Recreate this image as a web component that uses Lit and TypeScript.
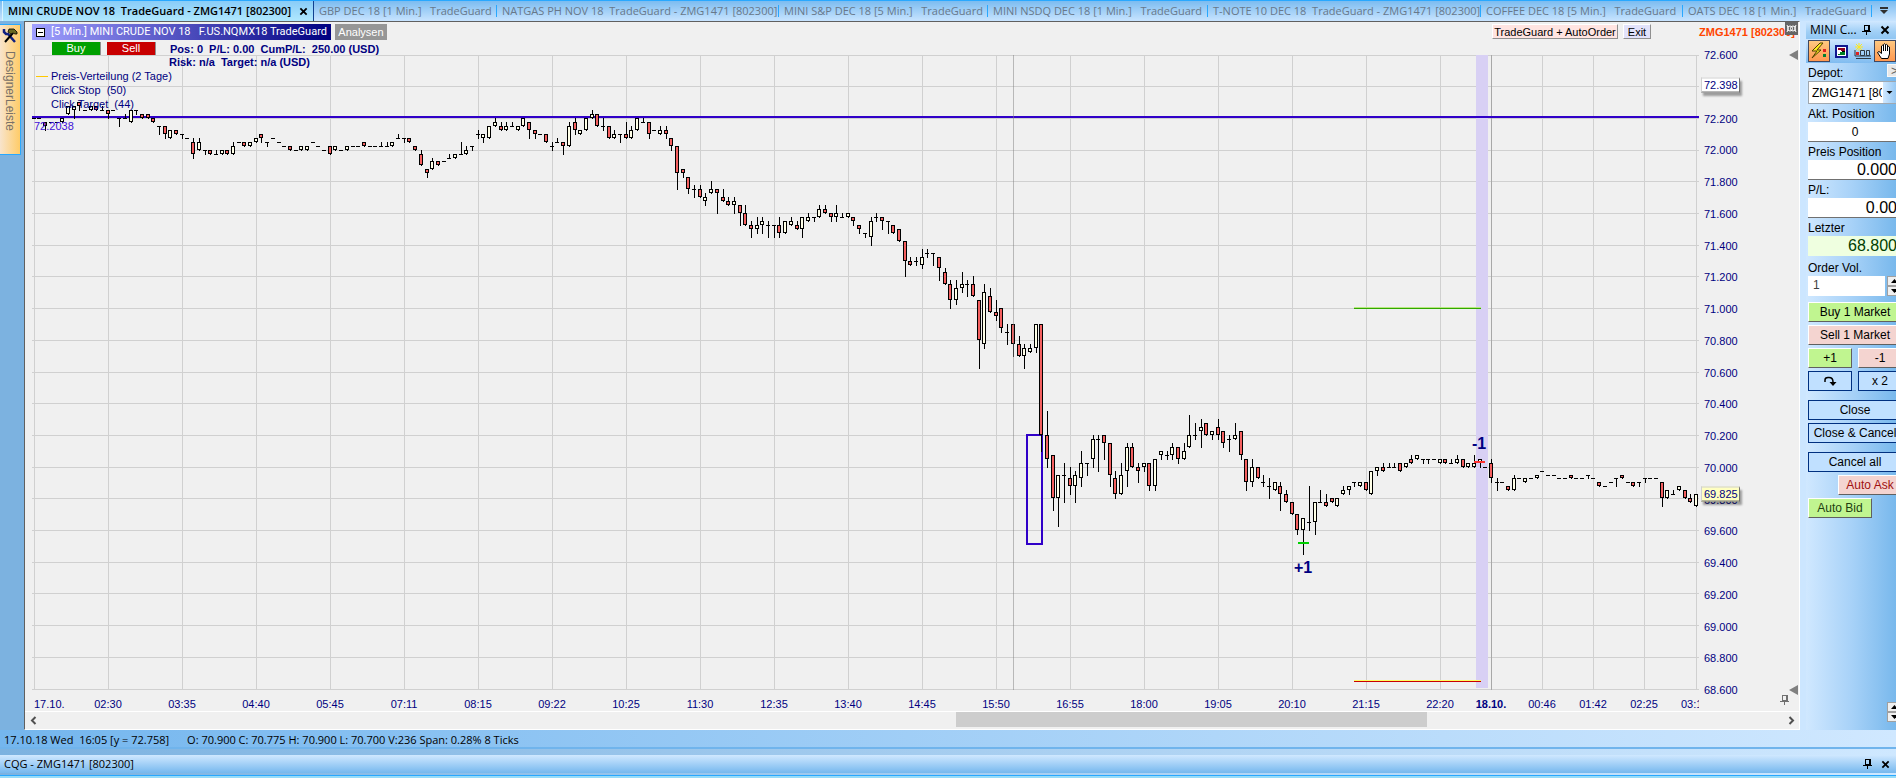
import { LitElement, html, svg, css } from "lit";
import { customElement } from "lit/decorators.js";
import { classMap } from "lit/directives/class-map.js";

/* Bars as [open, high, low, close], counted in 0.025 ticks below 72.600. A single number is a flat bar. */
type Bar = number | [number, number, number, number];
const BARS: Bar[] = [
  16, 16, [17, 17, 19, 18], 17, 17, [17, 16, 17, 16], [15, 13, 15, 13], [14, 13, 16, 13], [12, 12, 14, 13], 14,
  [14, 13, 14, 13], [13, 13, 14, 14], [14, 13, 14, 14], [14, 14, 16, 15], 14, [16, 16, 18, 16], [16, 15, 16, 16], [17, 14, 17, 14], [14, 14, 15, 14], [15, 15, 16, 16],
  [15, 15, 16, 16], [16, 16, 17, 17], [18, 18, 20, 18], [18, 18, 21, 20], [21, 19, 21, 19], [19, 19, 20, 20], [20, 20, 21, 20], 21, [22, 21, 26, 25], [24, 21, 24, 22],
  [24, 24, 25, 24], [24, 24, 25, 25], [25, 24, 25, 25], [25, 24, 25, 24], [24, 24, 25, 25], [25, 22, 25, 23], 22, [22, 22, 23, 23], [23, 22, 23, 22], [22, 21, 22, 21],
  [20, 20, 22, 21], [22, 22, 23, 22], 21, 22, 23, [23, 23, 24, 24], 24, [24, 23, 24, 23], [24, 23, 24, 23], 22,
  23, 24, [23, 23, 25, 25], [24, 23, 24, 23], 24, [24, 23, 24, 23], 23, 23, [22, 22, 23, 23], 23,
  23, [23, 22, 23, 23], [23, 22, 23, 23], [23, 22, 23, 22], [21, 20, 21, 21], [21, 21, 22, 21], [21, 21, 22, 22], [23, 23, 24, 24], [25, 24, 28, 28], [29, 29, 31, 30],
  [29, 26, 29, 27], [27, 27, 28, 28], 27, [26, 25, 26, 26], [26, 25, 26, 25], [25, 22, 25, 25], [25, 23, 25, 24], [23, 23, 24, 23], [20, 19, 21, 20], [21, 20, 22, 20],
  [21, 18, 21, 18], [18, 16, 18, 17], [18, 17, 19, 19], [19, 17, 19, 18], [18, 17, 18, 18], [19, 18, 19, 18], [18, 16, 18, 16], [17, 17, 21, 19], [19, 19, 21, 20], 20,
  [20, 20, 22, 22], [23, 22, 24, 23], [22, 21, 22, 22], [22, 22, 25, 23], [23, 17, 23, 18], [17, 16, 20, 19], [20, 19, 20, 19], [19, 16, 19, 16], [16, 14, 16, 15], [15, 15, 18, 18],
  [18, 16, 19, 18], [18, 18, 21, 21], [21, 19, 21, 20], [20, 20, 22, 20], [20, 17, 21, 21], [21, 18, 21, 19], [19, 16, 19, 16], [17, 16, 17, 17], [17, 17, 21, 20], 19,
  [20, 18, 20, 19], [19, 18, 21, 20], [21, 21, 24, 23], [23, 23, 34, 30], [29, 29, 31, 30], [31, 31, 35, 34], [34, 33, 36, 34], [34, 33, 36, 36], [37, 35, 38, 36], [35, 32, 35, 34],
  [34, 34, 40, 35], [36, 34, 37, 37], [37, 36, 38, 38], [38, 36, 40, 37], [38, 38, 43, 40], [40, 38, 43, 43], [43, 42, 46, 44], [44, 41, 45, 43], [43, 41, 45, 42], [43, 42, 46, 43],
  [43, 43, 46, 43], [43, 41, 46, 45], [45, 42, 45, 42], [43, 41, 43, 42], [43, 42, 44, 44], [44, 41, 46, 41], [42, 40, 42, 41], [41, 41, 42, 41], [41, 38, 41, 39], [39, 38, 40, 40],
  [40, 40, 42, 41], [41, 38, 42, 40], [41, 40, 41, 41], [41, 40, 41, 40], [41, 41, 43, 42], [43, 43, 45, 44], [45, 45, 46, 45], [46, 41, 48, 42], [41, 40, 42, 41], [41, 41, 44, 42],
  [42, 42, 45, 42], [43, 43, 45, 45], [44, 44, 47, 47], [47, 47, 56, 52], [52, 51, 53, 53], [52, 51, 53, 52], [53, 49, 54, 51], [50, 49, 51, 50], [50, 50, 53, 50], [51, 51, 57, 54],
  [55, 54, 58, 58], [58, 57, 64, 62], [62, 57, 63, 59], [59, 55, 60, 58], [58, 57, 61, 58], [58, 56, 61, 61], [62, 62, 79, 72], [73, 58, 74, 60], [61, 59, 65, 65], [65, 62, 67, 66],
  [64, 64, 70, 69], [70, 68, 73, 70], [68, 68, 76, 73], [73, 71, 76, 76], [76, 73, 79, 74], [75, 73, 75, 74], [74, 68, 75, 68], [68, 68, 100, 96], [96, 90, 104, 102], [101, 101, 115, 112],
  [112, 106, 119, 106], [106, 103, 113, 106], [107, 104, 111, 109], [109, 105, 113, 106], [107, 100, 109, 103], [103, 103, 106, 103], [102, 96, 104, 97], [97, 96, 105, 97], [96, 96, 102, 98], [98, 98, 109, 106],
  [107, 105, 112, 111], [111, 103, 111, 106], [105, 98, 109, 99], [99, 98, 104, 104], [104, 103, 108, 105], [104, 103, 105, 103], [103, 103, 110, 109], [109, 102, 110, 102], [101, 100, 102, 100], [101, 100, 102, 101],
  [101, 98, 102, 99], [99, 99, 103, 102], [102, 98, 102, 100], [99, 91, 99, 96], [96, 93, 97, 96], [95, 92, 99, 94], [93, 93, 96, 96], [96, 95, 97, 95], [94, 92, 97, 96], [95, 95, 99, 98],
  [97, 96, 100, 97], [97, 93, 97, 96], [95, 95, 102, 101], [102, 102, 110, 108], [108, 102, 109, 104], [104, 104, 107, 107], [108, 106, 109, 108], [109, 107, 112, 109], [110, 108, 110, 108], [109, 108, 115, 111],
  [111, 110, 113, 113], [113, 113, 116, 116], [116, 116, 121, 120], [120, 117, 126, 117], [118, 109, 120, 118], [118, 113, 121, 113], [113, 110, 113, 113], [113, 111, 114, 114], [112, 112, 113, 113], [114, 112, 114, 112],
  [111, 109, 111, 110], [110, 109, 111, 109], [108, 108, 109, 108], [109, 108, 109, 108], [108, 108, 110, 110], [111, 105, 111, 105], [105, 104, 106, 104], [104, 103, 105, 105], [104, 103, 104, 104], [104, 103, 104, 104],
  [103, 103, 105, 105], [104, 103, 104, 103], [102, 101, 103, 103], [102, 101, 102, 101], [102, 102, 103, 102], [102, 102, 103, 102], 102, [103, 102, 103, 102], [102, 102, 103, 103], [103, 102, 103, 103],
  [103, 101, 103, 102], [102, 102, 104, 104], [104, 103, 104, 103], [104, 101, 104, 103], [103, 102, 104, 102], 104, [103, 102, 108, 107], [108, 107, 110, 108], 108, [109, 109, 110, 110],
  [110, 106, 110, 107], 107, [108, 107, 108, 107], 107, [107, 106, 107, 106], 105, 106, 106, 107, 107,
  [106, 106, 107, 107], 107, 107, [106, 106, 107, 106], 107, [108, 108, 109, 109], 109, 108, [107, 107, 109, 107], [106, 106, 107, 107],
  108, [108, 108, 109, 109], [108, 108, 109, 108], [107, 107, 108, 107], 107, 107, [108, 108, 114, 112], [112, 110, 112, 110], [111, 110, 111, 111], [110, 109, 110, 109],
  [110, 110, 112, 112], [112, 111, 113, 113], [114, 111, 114, 111],
];

const PLOT_W = 1667;
const PLOT_H = 635;
const tickY = (t: number) => Math.floor((t * 634) / 160);
const barX = (i: number) => 2 + Math.floor((i * 74) / 13 + 0.3);

const TIMES = [
  "17.10.", "02:30", "03:35", "04:40", "05:45", "07:11", "08:15", "09:22", "10:25", "11:30", "12:35", "13:40",
  "14:45", "15:50", "16:55", "18:00", "19:05", "20:10", "21:15", "22:20", "18.10.", "00:46", "01:42", "02:25", "03:13",
];

const pin = svg`<path d="M3 1.5h5v5H3zM7 2v4M1 7h9M5.5 7v4" fill="none" stroke="currentColor" stroke-width="1" shape-rendering="crispEdges"/>`;
const cross = svg`<path d="M1.5 1.5l7 7M8.500 1.5l-7 7" fill="none" stroke="currentColor" stroke-width="2"/>`;

@customElement("price-chart")
export class PriceChart extends LitElement {
  static styles = css`
    :host { display: flex; flex-direction: column; min-width: 0; background: #f0f0f0; color: #000080;
      font: 11px/14px "Liberation Sans", Arial, sans-serif; border: solid; border-width: 1px;
      border-color: #606060 #fff #fff #606060; box-sizing: border-box; }
    button { font: inherit; padding: 0; border: 0; margin: 0; color: inherit; white-space: nowrap; }
    .title { display: flex; align-items: stretch; height: 16px; margin: 2px 0 0 7px; gap: 4px; position: relative; }
    .name { display: flex; align-items: center; gap: 6px; min-width: 297px; padding: 0 4px; box-sizing: border-box;
      color: #fff; font: 11px/16px Roboto, "Liberation Sans", sans-serif; white-space: pre; background: linear-gradient(90deg, #a0a0ff, #000080); }
    .fold { width: 9px; height: 9px; flex: none; display: grid; background: #fff; border: 1px solid #000; box-sizing: border-box; }
    .fold svg { width: 7px; height: 7px; }
    .analyse { background: #969696; color: #fff; width: 52px; }
    .spacer { flex: 1; }
    .auto, .exit { height: 15px; border: 1px solid #fff; border-color: #fff #909090 #909090 #fff; color: #000; box-sizing: border-box; }
    .auto { background: #ffe4e1; width: 126px; margin-right: 1px; }
    .exit { background: #e2e2fa; width: 28px; }
    .account { width: 100px; box-sizing: border-box; margin-left: 44px; color: #ff4500; font-weight: bold; line-height: 16px; white-space: nowrap; }
    .link { position: absolute; right: 1px; top: -2px; width: 13px; height: 13px; background: #666; }
    .orders { display: flex; align-items: center; height: 13px; margin: 2px 0 0 27px; gap: 6px; font-weight: bold; white-space: pre; }
    .orders button { width: 49px; height: 13px; line-height: 13px; color: #fff; font-weight: normal; border-right: 1px solid #909090; box-sizing: border-box; }
    .buy { background: #00a000; }
    .sell { background: #c80000; }
    .pos { margin-left: 8px; }
    .body { flex: 1; display: grid; grid-template-columns: minmax(0, 1fr) 100px; margin-left: 7px; min-height: 200px; }
    .plot { display: grid; min-width: 0; min-height: 0; position: relative; }
    .canvas, .notes { grid-area: 1 / 1; min-width: 0; min-height: 0; }
    .canvas { width: 100%; height: 100%; display: block; }
    .notes { z-index: 1; display: flex; flex-direction: column; align-items: flex-start; white-space: pre; pointer-events: none; }
    .risk { font-weight: bold; margin-left: 137px; }
    .legend { padding-left: 19px; position: relative; }
    .legend.key::before { content: ""; position: absolute; left: 4px; top: 7px; width: 12px; height: 1px; background: #ffc800; }
    .level { color: #4010d8; padding: 8px 0 0 2px; }
    .mark { position: absolute; transform: translate(-50%, -50%); font: bold 16px/16px "Liberation Sans", Arial, sans-serif; }
    .scale { position: relative; display: grid; }
    .prices { list-style: none; margin: -6px 0; padding: 0 0 0 5px; display: flex; flex-direction: column; justify-content: space-between; line-height: 12px; }
    .tag { position: absolute; left: 2px; width: 39px; height: 15px; box-sizing: border-box; padding-left: 2px; line-height: 13px;
      background: #fff; border: 1px solid #c8c8c8; border-color: #d0d0d0 #707070 #707070 #d0d0d0; box-shadow: 2px 3px 2px rgba(0,0,0,.35); transform: translateY(-50%); }
    .tag.last { background: #ffffc0; }
    .grip { position: absolute; right: 1px; width: 9px; height: 10px; color: #808080; }
    .grip.top { top: -5px; }
    .grip.end { bottom: -5px; }
    .times { list-style: none; margin: 0 100px 0 7px; padding: 7px 0 0; height: 21px; box-sizing: border-box; display: grid; overflow: hidden;
      grid-template-columns: minmax(0, 39fr) repeat(19, minmax(0, 74fr)) minmax(0, 28fr) minmax(0, 74fr) minmax(0, 28fr) minmax(0, 74fr) minmax(0, 18fr); }
    .times li { justify-self: center; white-space: nowrap; }
    .times li:first-child { justify-self: start; padding-left: 2px; }
    .times li:last-child { justify-self: start; }
    .times .day { font-weight: bold; }
    .foot { position: relative; }
    .foot .pin { position: absolute; right: 9px; top: 4px; width: 11px; height: 12px; color: #707070; }
    .bar { height: 18px; box-sizing: border-box; border-top: 1px solid #fff; display: grid; grid-template-columns: 16px 915fr 471fr 356fr 16px; }
    .bar button { background: none; display: grid; place-items: center; color: #505050; }
    .bar svg { width: 7px; height: 9px; }
    .thumb { background: #cdcdcd; grid-column: 3; height: 15px; }
    .bar .next { grid-column: 5; }
  `;

  private candle(b: Bar, i: number) {
    const [o, h, l, c] = typeof b === "number" ? [b, b, b, b] : b;
    const x = barX(i);
    const top = tickY(Math.min(o, c));
    const bottom = tickY(Math.max(o, c));
    return svg`
      ${l > h ? svg`<rect x=${x} y=${tickY(h)} width="1" height=${tickY(l) - tickY(h) + 1} fill="#000"/>` : null}
      ${o === c
        ? svg`<rect x=${x - 2} y=${top} width="4" height="1" fill="#000"/>`
        : svg`<rect x=${x - 1.5} y=${top + 0.5} width="3" height=${bottom - top - 1} fill=${c > o ? "#f46060" : "#ffffe8"} stroke="#000"/>`}`;
  }

  render() {
    const rows = Array.from({ length: 21 }, (_, k) => k);
    const cols = Array.from({ length: 20 }, (_, k) => 2 + 74 * k).concat([1510, 1561, 1612, 1664]);
    return html`
      <div class="title">
        <div class="name"><span class="fold"><svg viewBox="0 0 7 7"><path d="M1 3.5h5" stroke="#000"/></svg></span><span>[5 Min.] MINI CRUDE NOV 18   F.US.NQMX18 TradeGuard</span></div>
        <button class="analyse">Analysen</button>
        <span class="spacer"></span>
        <button class="auto">TradeGuard + AutoOrder</button>
        <button class="exit">Exit</button>
        <span class="account">ZMG1471 [802300]</span>
        <svg class="link" viewBox="0 0 13 13"><path d="M2 10q3-3.500 0-7M11 10q-3-3.500 0-7" stroke="#fff" fill="none"/><circle cx="5" cy="6.5" r="2.500" fill="none" stroke="#fff"/><circle cx="8" cy="6.5" r="2.500" fill="none" stroke="#fff"/></svg>
      </div>
      <div class="orders">
        <button class="buy">Buy</button><button class="sell">Sell</button>
        <span class="pos">Pos: 0  P/L: 0.00  CumP/L:  250.00 (USD)</span>
      </div>
      <div class="body">
        <div class="plot">
          <svg class="canvas" viewBox="0 0 ${PLOT_W} ${PLOT_H}" preserveAspectRatio="none" shape-rendering="crispEdges">
            ${rows.map((k) => svg`<rect x="0" y=${tickY(k * 8)} width=${PLOT_W} height="1" fill="#d0d0d0"/>`)}
            ${cols.map((x) => svg`<rect x=${x} y="0" width="1" height=${PLOT_H} fill="#d0d0d0"/>`)}
            <rect x="1444" y="0" width="12" height="633" fill="#d8d0f4"/>
            <rect x="1459" y="0" width="1" height=${PLOT_H} fill="#a8a8a8"/>
            <rect x="0" y="61" width=${PLOT_W} height="2" fill="#3000c8"/>
            <rect x="995" y="380" width="15" height="109" fill="none" stroke="#3000c8" stroke-width="2"/>
            <rect x="1322" y="252" width="127" height="1" fill="#b8e880"/>
            <rect x="1322" y="253" width="127" height="1" fill="#30a800"/>
            <rect x="1322" y="625" width="127" height="1" fill="#ffff60"/>
            <rect x="1322" y="626" width="127" height="1" fill="#c80000"/>
            ${BARS.map((b, i) => this.candle(b, i))}
            <rect x="981" y="0" width="1" height=${PLOT_H} fill="#808080" opacity=".5"/>
            <rect x="1266" y="487" width="11" height="2" fill="#00d000"/>
            <rect x="1442" y="406" width="11" height="2" fill="#ff3030"/>
          </svg>
          <div class="notes">
            <span class="risk">Risk: n/a  Target: n/a (USD)</span>
            <span class="legend key">Preis-Verteilung (2 Tage)</span>
            <span class="legend">Click Stop  (50)</span>
            <span class="legend">Click Target  (44)</span>
            <span class="level">72.2038</span>
          </div>
          ${[["+1", 1271, 513], ["-1", 1447, 389]].map(([t, x, y]) => html`<span class="mark" style="left:${(+x / PLOT_W) * 100}%;top:${(+y / PLOT_H) * 100}%">${t}</span>`)}
        </div>
        <div class="scale">
          <ul class="prices">${rows.map((k) => html`<li>${(72.6 - k * 0.2).toFixed(3)}</li>`)}</ul>
          ${[72.398, 69.825].map((p, i) => html`<span class=${classMap({ tag: true, last: i === 1 })} style="top:${((72.6 - p) / 4) * 100 - 0.3}%">${p.toFixed(3)}</span>`)}
          <svg class="grip top" viewBox="0 0 9 10"><path d="M0 5L9 0V10z" fill="currentColor"/></svg>
          <svg class="grip end" viewBox="0 0 9 10"><path d="M0 5L9 0V10z" fill="currentColor"/></svg>
        </div>
      </div>
      <div class="foot">
        <ul class="times">${TIMES.map((t, i) => html`<li class=${i === 20 ? "day" : ""}>${t}</li>`)}</ul>
        <svg class="pin" viewBox="0 0 11 12">${pin}</svg>
      </div>
      <div class="bar">
        <button class="prev" aria-label="Zurück"><svg viewBox="0 0 7 9"><path d="M5.500 1L2 4.500L5.500 8" fill="none" stroke="currentColor" stroke-width="2"/></svg></button>
        <div class="thumb"></div>
        <button class="next" aria-label="Weiter"><svg viewBox="0 0 7 9"><path d="M1.500 1L5 4.500L1.500 8" fill="none" stroke="currentColor" stroke-width="2"/></svg></button>
      </div>`;
  }
}

@customElement("order-panel")
export class OrderPanel extends LitElement {
  static styles = css`
    :host { display: flex; flex-direction: column; overflow: hidden; padding-left: 6px; background: #cce6ff; box-sizing: border-box;
      font: 12px/16px "Liberation Sans", Arial, sans-serif; color: #000; }
    button, input, select { font: inherit; margin: 0; box-sizing: border-box; color: inherit; }
    button { padding: 0; white-space: nowrap; cursor: default; }
    .head { display: flex; align-items: center; height: 18px; padding: 0 2px 0 4px; flex: none; font: 12px/18px "Open Sans", sans-serif;
      background: linear-gradient(#d0e8ff, #a0cff6 60%, #90c6f2); }
    .head b { flex: 1; font-weight: normal; white-space: nowrap; }
    .head button { border: 0; background: none; display: grid; place-items: center; width: 19px; height: 16px; }
    .head .pin { width: 11px; height: 12px; }
    .head .x { width: 10px; height: 10px; }
    .tools { display: grid; grid-template-columns: repeat(4, 22px); height: 24px; align-items: center; flex: none; padding: 0 2px;
      background: linear-gradient(#cfe7ff, #80bcf0); }
    .tools button { width: 22px; height: 22px; border: 1px solid transparent; background: none; display: grid; place-items: center; }
    .tools .on { background: linear-gradient(#ffc880, #ff9850); border-color: #404860; }
    .tools svg { width: 18px; height: 18px; }
    .form { flex: 1; padding-left: 2px; display: flex; flex-direction: column; align-items: flex-start; background: linear-gradient(90deg, #d0e8ff, #a8d2f8 50%, #78b8ec); }
    .form > * { flex: none; }
    .row { display: flex; align-items: flex-start; width: 94px; justify-content: space-between; }
    label { padding-top: 2px; height: 18px; box-sizing: border-box; }
    .more { width: 15px; height: 13px; margin-top: 1px; border: 1px solid #f8f8f8; background: #e8e8e8; color: #606060; line-height: 10px; }
    .depot { position: relative; width: 94px; height: 23px; }
    .depot select { width: 94px; height: 23px; appearance: none; border: 1px solid #a0a8b0; border-radius: 0; background: #fff; padding: 0 19px 0 3px; }
    .depot .drop { position: absolute; right: 1px; top: 1px; width: 18px; height: 21px; background: linear-gradient(90deg, #d0e8ff, #80bcf0); pointer-events: none; }
    input { height: 20px; width: 94px; border: 0; border-bottom: 1px solid #707070; border-radius: 0; padding: 0 5px; background: #fff; }
    .center { text-align: center; }
    .num { text-align: right; font-size: 16px; }
    .last { background: #efffe0; color: #004000; border-bottom-color: #efffe0; }
    .order { padding-top: 4px; height: 20px; }
    .vol { width: 77px; color: #404040; border: 0; padding-bottom: 3px; }
    .spin { display: grid; width: 15px; height: 20px; }
    .spin button { width: 15px; height: 10px; border: 1px solid #a0a0a0; background: #f0f0f0; display: grid; place-items: center; }
    .spin svg { width: 7px; height: 4px; }
    .set { display: grid; grid-template-columns: 44px 44px; gap: 3px 6px; width: 94px; padding-top: 6px; }
    .set + .set { padding-top: 9px; }
    .set button { height: 20px; border: 1px solid #003080; background: #c0e0ff; display: grid; place-items: center; }
    .set .wide { grid-column: 1 / 3; }
    .set .green, .set .red { border-color: #fff #606060 #606060 #fff; }
    .set .green { background: #c0f590; }
    .set .red { background: #f4d4d0; }
    .set .bid, .set .ask { width: 64px; grid-column: 1 / 3; }
    .set .ask { justify-self: end; color: #a01010; }
    .set .bid { color: #204010; }
    .set svg { width: 14px; height: 12px; }
    .end { margin: auto 0 8px 79px; }
  `;

  private spinner(cls: string) {
    return html`<span class="spin ${cls}">
      <button aria-label="Mehr"><svg viewBox="0 0 7 4"><path d="M0 4L3.500 0L7 4z"/></svg></button>
      <button aria-label="Weniger"><svg viewBox="0 0 7 4"><path d="M0 0L3.500 4L7 0z"/></svg></button>
    </span>`;
  }

  render() {
    return html`
      <div class="head"><b>MINI C...</b>
        <button aria-label="Anheften"><svg class="pin" viewBox="0 0 11 12">${pin}</svg></button>
        <button aria-label="Schließen"><svg class="x" viewBox="0 0 10 10">${cross}</svg></button>
      </div>
      <div class="tools">
        <button class="on" aria-label="Schnellorder"><svg viewBox="0 0 18 18"><path d="M10 1L2 9h5l-5 7l9-8H7l6-7z" fill="#ffee20" stroke="#504000" stroke-width="1"/><path d="M13 7h3v3h-3z" fill="#e02020"/><path d="M13 12h3v3h-3z" fill="#008030"/></svg></button>
        <button aria-label="Orderbuch"><svg viewBox="0 0 18 18" shape-rendering="crispEdges"><path d="M4 4h11v11H4z" fill="#fff" stroke="#101890" stroke-width="2"/><path d="M6 6h7v2H6zM9 8h4v1H9z" fill="#900020"/><path d="M6 12h7v1H6zM8 10h5v2H8z" fill="#008020"/><path d="M10 9h3v1h-3z" fill="#000"/></svg></button>
        <button aria-label="Neue Order"><svg viewBox="0 0 18 18"><path d="M5 1v8M1 5h8M2 2l6 6M8 2L2 8" stroke="#ffe820"/><path d="M1 8v6h16M6.500 8.500h4v5h-4zM12.500 8.500h3v5h-3zM2 16.500h15" fill="none" stroke="#303840"/><path d="M2 10h3v3H2z" fill="#e02020"/></svg></button>
        <button class="on" aria-label="Hand"><svg viewBox="0 0 18 18"><path d="M5.500 16.500L1.500 10.500l1.500-1 2.500 2V4q1-1.500 2 0V2.500q1-1.500 2 0V3q1.200-1.300 2 0v2q1.200-1.200 2 0v7l-1.500 4.500zM7.500 4v5M9.500 3v6M11.500 4v5" fill="#fff" stroke="#000"/></svg></button>
      </div>
      <div class="form">
        <div class="row"><label for="depot">Depot:</label><button class="more">&gt;</button></div>
        <div class="depot"><select id="depot"><option>ZMG1471 [802300]</option></select>
          <svg class="drop" viewBox="0 0 18 21"><path d="M3.500 9h6L6.500 12z"/></svg></div>
        <label for="pos">Akt. Position</label><input id="pos" class="center" readonly value="0">
        <label for="price">Preis Position</label><input id="price" class="num" readonly value="0.000">
        <label for="pl">P/L:</label><input id="pl" class="num" readonly value="0.00">
        <label for="last">Letzter</label><input id="last" class="num last" readonly value="68.800">
        <label for="vol" class="order">Order Vol.</label>
        <div class="row"><input id="vol" class="vol" value="1">${this.spinner("")}</div>
        <div class="set">
          <button class="wide green">Buy 1 Market</button>
          <button class="wide red">Sell 1 Market</button>
          <button class="green">+1</button><button class="red">-1</button>
          <button aria-label="Drehen"><svg viewBox="0 0 14 12"><path d="M2 7V5q0-2.500 3-2.500h1q4 0 4 4.500" fill="none" stroke="#000" stroke-width="1.500"/><path d="M6.500 7h7L10 11z"/></svg></button><button>x 2</button>
        </div>
        <div class="set">
          <button class="wide">Close</button>
          <button class="wide">Close &amp; Cancel</button>
        </div>
        <div class="set">
          <button class="wide">Cancel all</button>
          <button class="red ask">Auto Ask</button>
          <button class="green bid">Auto Bid</button>
        </div>
        ${this.spinner("end")}
      </div>`;
  }
}

const TABS = [
  "GBP DEC 18 [1 Min.]   TradeGuard",
  "NATGAS PH NOV 18  TradeGuard - ZMG1471 [802300]",
  "MINI S&P DEC 18 [5 Min.]   TradeGuard",
  "MINI NSDQ DEC 18 [1 Min.]   TradeGuard",
  "T-NOTE 10 DEC 18  TradeGuard - ZMG1471 [802300]",
  "COFFEE DEC 18 [5 Min.]   TradeGuard",
  "OATS DEC 18 [1 Min.]   TradeGuard",
];

@customElement("app-root")
export class AppRoot extends LitElement {
  static styles = css`
    :host { display: flex; flex-direction: column; height: 100vh; min-height: 600px; overflow: hidden; box-sizing: border-box;
      font: 11px/18px "Open Sans", "Noto Sans", sans-serif; color: #000; background: linear-gradient(90deg, #7cb2e0, #cfe8ff); }
    button { font: inherit; margin: 0; padding: 0; border: 0; background: none; color: inherit; }
    .tabs { flex: none; height: 21px; box-sizing: border-box; border-top: 1px solid #28a8ff; display: grid; white-space: pre;
      grid-template-columns: minmax(0, 314fr) minmax(0, 183fr) minmax(0, 282fr) minmax(0, 209fr) minmax(0, 220fr) minmax(0, 273fr) minmax(0, 202fr) minmax(0, 189fr) 24px;
      background: linear-gradient(#7cbcf0, #c8e4ff); color: #68788a; align-items: center; }
    .tab { display: flex; align-items: center; height: 20px; padding-left: 5px; position: relative; white-space: pre; }
    .tab:not(.active)::after { content: ""; position: absolute; right: 0; top: 4px; width: 1px; height: 12px; background: #28a8ff; }
    .active { justify-content: space-between; margin-left: 2px; padding: 0 5px; background: linear-gradient(#88ccf8, #b0e8fe); color: #000; font-weight: 600;
      border-right: 1px solid #104090; border-left: 1px solid #d8f4ff; }
    .active svg, .foot svg { width: 9px; height: 9px; flex: none; }
    .menu { display: grid; place-items: center; }
    .menu svg { width: 8px; height: 8px; }
    .main { flex: 1; min-height: 0; display: grid; grid-template-columns: 24px minmax(0, 1fr) 96px; }
    .side { padding-top: 3px; background: #7cb2e0; }
    .designer { width: 21px; height: 131px; box-sizing: border-box; display: flex; flex-direction: column; align-items: center; gap: 8px; padding-top: 2px;
      border: 1px solid #28a8ff; border-left: 0; background: linear-gradient(90deg, #f8e4cc, #ffcc68); color: #787068;
      font: 12px/16px "Liberation Sans", Arial, sans-serif; }
    .designer svg { width: 16px; height: 16px; }
    .designer span { writing-mode: vertical-rl; }
    .status { flex: none; height: 19px; box-sizing: border-box; border-bottom: 2px solid #70b4ec; padding: 1px 4px 0; display: flex; gap: 18px; white-space: pre;
      background: linear-gradient(90deg, #74b6ee, #d0e8ff); }
    .foot { flex: none; margin-top: 6px; height: 18px; padding: 0 6px 0 4px; display: flex; align-items: center; gap: 8px;
      background: linear-gradient(#d0e8ff, #76b8ee); }
    .foot b { flex: 1; font-weight: normal; }
    .foot .pin { width: 11px; height: 12px; }
    .foot button { display: grid; }
    .edge { flex: none; margin-top: 2px; height: 3px; box-sizing: border-box; border-top: 1px solid #28a8ff; background: #98dcf8; }
  `;

  render() {
    return html`
      <nav class="tabs">
        <button class="tab active"><span>MINI CRUDE NOV 18  TradeGuard - ZMG1471 [802300]</span><svg viewBox="0 0 10 10">${cross}</svg></button>
        ${TABS.map((t) => html`<button class="tab">${t}</button>`)}
        <button class="menu" aria-label="Alle Fenster"><svg viewBox="0 0 8 8"><path d="M0 0h8v2H0zM0 3h8L4 7z" fill="#303030"/></svg></button>
      </nav>
      <main class="main">
        <div class="side">
          <button class="designer">
            <svg viewBox="0 0 16 16"><path d="M2 2v3l2 2h2l7 8" fill="none" stroke="#102080" stroke-width="2.500"/><path d="M3 15l8-9" stroke="#000" stroke-width="2"/><path d="M7 2h5l3 3v2h-2l-2-1-2 1-3-2z" fill="#6a6a20" stroke="#000" stroke-width=".8"/></svg>
            <span>DesignerLeiste</span>
          </button>
        </div>
        <price-chart></price-chart>
        <order-panel></order-panel>
      </main>
      <div class="status"><span>17.10.18 Wed  16:05 [y = 72.758]</span><span>O: 70.900 C: 70.775 H: 70.900 L: 70.700 V:236 Span: 0.28% 8 Ticks</span></div>
      <footer class="foot"><b>CQG - ZMG1471 [802300]</b>
        <button aria-label="Anheften"><svg class="pin" viewBox="0 0 11 12">${pin}</svg></button>
        <button aria-label="Schließen"><svg viewBox="0 0 10 10">${cross}</svg></button>
      </footer>
      <div class="edge"></div>`;
  }
}
